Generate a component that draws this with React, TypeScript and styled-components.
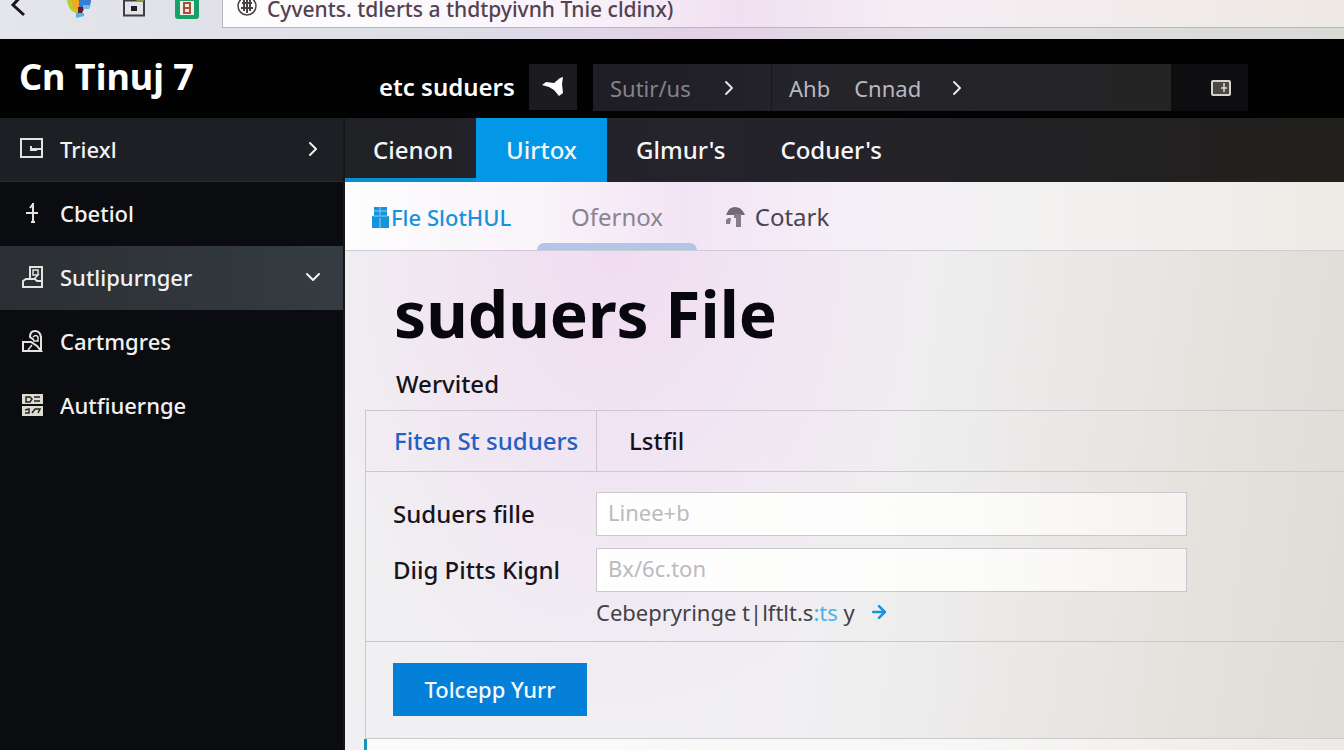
import React from "react";
import styled, { createGlobalStyle, css } from "styled-components";
import { ArrowRight, ChevronDown, ChevronRight } from "lucide-react";

const GlobalStyle = createGlobalStyle`
  *, *::before, *::after { box-sizing: border-box; }
  body {
    margin: 0;
    background: #0a0b0d;
    color: #141318;
    font-family: "Noto Sans", "Open Sans", sans-serif;
    font-size: 24px;
    line-height: 32px;
    font-weight: 500;
  }
  #root { min-height: 100vh; display: flex; }
  a { color: inherit; text-decoration: none; }
  button, input { font: inherit; color: inherit; border: 0; border-radius: 0; margin: 0; }
  svg { display: block; flex: none; }
`;

const Page = styled.div`
  flex: 1;
  min-width: 0;
  min-height: 100vh;
  display: flex;
  flex-direction: column;
`;

/* Browser strip */
const BrowserBar = styled.div`
  height: 39px;
  flex: none;
  display: flex;
  align-items: flex-start;
  background: linear-gradient(90deg, #e4e6eb 0%, #dcdce6 35%, #e3d0e6 52%, #e2dfe4 70%, #d9d9d6 100%);
`;

const BrowserTools = styled.div`
  width: 222px;
  flex: none;
  display: flex;
`;

const ToolButton = styled.button`
  padding: 0;
  background: none;
`;

const AddressBox = styled.label`
  flex: 1;
  height: 28px;
  display: flex;
  align-items: flex-start;
  gap: 8px;
  padding-left: 14px;
  border: solid #b9b6c0;
  border-width: 0 0 1px 1px;
  background: linear-gradient(90deg, #fefefe 0%, #f9f4fb 30%, #f1e0f2 46%, #f5eef4 62%, #eee9e4 100%);
`;

const AddressInput = styled.input`
  flex: 1;
  min-width: 0;
  height: 24px;
  padding: 0 0 6px;
  background: none;
  outline: none;
  color: #55414f;
  font-size: 21px;
  line-height: 18px;
`;

/* Header */
const Header = styled.header`
  height: 79px;
  flex: none;
  display: flex;
  background: #020203;
  color: #fff;
`;

const Brand = styled.a`
  width: 379px;
  flex: none;
  padding: 14px 0 0 19px;
  font-size: 36px;
  line-height: 48px;
  font-weight: 700;
`;

const HeaderTools = styled.div`
  flex: 1;
  display: flex;
  align-items: flex-start;
  padding: 25px 96px 0 0;
`;

const HostName = styled.span`
  width: 150px;
  flex: none;
  line-height: 46px;
  font-weight: 600;
`;

const SendButton = styled.button`
  width: 48px;
  height: 46px;
  flex: none;
  display: flex;
  align-items: center;
  justify-content: center;
  padding: 0;
  margin-right: 16px;
  background: #1b1b20;
`;

const Crumbs = styled.nav`
  flex: 1;
  height: 47px;
  display: flex;
  background: linear-gradient(90deg, #1e1d23, #25242a 40%, #242425);
  color: #b3b1ba;
  font-size: 22px;
  font-weight: 400;
`;

const Crumb = styled.a<{ $first?: boolean }>`
  display: flex;
  align-items: center;
  padding: 0 17px;
  white-space: pre;
  gap: ${(p) => (p.$first ? "26px" : "24px")};
  color: ${(p) => (p.$first ? "#85838c" : "#b9b8c2")};
  width: ${(p) => (p.$first ? "179px" : "auto")};
  border-right: ${(p) => (p.$first ? "1px solid #19181e" : "0")};
`;

const PanelButton = styled.button`
  width: 77px;
  height: 47px;
  display: flex;
  align-items: center;
  justify-content: center;
  padding: 0 0 0 22px;
  background: #0e0e10;
`;

/* Body */
const Body = styled.div`
  flex: 1;
  display: flex;
`;

const Sidebar = styled.nav`
  width: 345px;
  flex: none;
  background: #0b0c0f;
  border-right: 2px solid #15161a;
  color: #f1f2f2;
  font-size: 22px;
`;

const SideItem = styled.a<{ $tone?: "soft" | "active" }>`
  height: 64px;
  display: flex;
  align-items: center;
  gap: 14px;
  padding: 0 18px 2px 20px;
  ${(p) =>
    p.$tone === "soft" &&
    css`
      background: #1c1f23;
      border-bottom: 1px solid #2b2e32;
    `}
  ${(p) =>
    p.$tone === "active" &&
    css`
      background: linear-gradient(90deg, #2b2f33, #343c42);
    `}
`;

const SideLabel = styled.span`
  flex: 1;
`;

const Main = styled.main`
  flex: 1;
  min-width: 0;
  display: flex;
  flex-direction: column;
  background:
    radial-gradient(ellipse 320px 480px at 27% 20%, rgba(240, 214, 242, 0.75), rgba(240, 214, 242, 0)),
    linear-gradient(98deg, #f0f0f1 0%, #f1eff3 40%, #efeeef 56%, #e6e3df 82%, #dfdbd5 100%);
`;

const TopTabs = styled.nav`
  height: 64px;
  flex: none;
  display: flex;
  background: linear-gradient(90deg, #202125, #25232b 35%, #222227 60%, #22201c);
  color: #f6f5f8;
`;

const TopTab = styled.a<{ $state?: "active" | "lined" }>`
  display: flex;
  align-items: center;
  padding: 0 26px 0 29px;
  ${(p) =>
    p.$state === "active" &&
    css`
      justify-content: center;
      width: 131px;
      padding: 0;
      background: #0397e8;
    `}
  ${(p) =>
    p.$state === "lined" &&
    css`
      width: 131px;
      padding: 4px 0 0 28px;
      border-bottom: 4px solid #078fd4;
    `}
`;

const SubTabs = styled.nav`
  height: 69px;
  flex: none;
  display: flex;
  padding-left: 27px;
  background: linear-gradient(90deg, #fdfdfd 0%, #f9f3fa 20%, #f3e4f5 34%, #f5eff7 50%, #f3f2f2 66%, #eeebe6 100%);
  border-bottom: 1px solid #cfcbd3;
  color: #4b4450;
  font-weight: 400;
`;

const SubTab = styled.a<{ $state?: "current" | "marked" }>`
  display: flex;
  flex-direction: column;
  align-items: center;
  justify-content: space-between;
  width: 160px;
  padding-top: 19px;
  ${(p) =>
    p.$state === "current" &&
    css`
      align-items: flex-start;
      width: 165px;
      color: #1593dc;
      font-size: 22px;
      font-weight: 500;
    `}
  ${(p) => p.$state === "marked" && css`color: #8a8390;`}
`;

const SubTabLabel = styled.span`
  display: flex;
  align-items: center;
  gap: 2px;
`;

const WideLabel = styled(SubTabLabel)`
  gap: 9px;
`;

const Marker = styled.span`
  align-self: stretch;
  height: 7px;
  border-radius: 7px 7px 0 0;
  background: #b3c6ea;
`;

const Title = styled.h1`
  margin: 0;
  padding: 19px 0 0 49px;
  font-size: 64px;
  line-height: 88px;
  font-weight: 700;
  color: #09070e;
`;

const Intro = styled.p`
  margin: 0;
  padding: 10px 0 10px 51px;
`;

const Panel = styled.section`
  margin-left: 20px;
  border: solid #cdc8d0;
  border-width: 1px 0 1px 1px;
`;

const PanelTabs = styled.nav`
  height: 61px;
  display: flex;
  border-bottom: 1px solid #cdc8d0;
`;

const PanelTab = styled.a<{ $current?: boolean }>`
  display: flex;
  align-items: center;
  padding: 0 32px;
  ${(p) =>
    p.$current &&
    css`
      width: 231px;
      padding: 0 0 0 28px;
      color: #235fc4;
      border-right: 1px solid #cdc8d0;
    `}
`;

const Form = styled.form`
  margin: 0;
`;

const Fields = styled.div`
  display: grid;
  grid-template-columns: 203px minmax(0, 1fr);
  row-gap: 12px;
  align-items: center;
  padding: 20px 157px 11px 27px;
  border-bottom: 1px solid #cac7ca;
`;

const FieldLabel = styled.label`
  color: #17141c;
`;

const TextField = styled.input`
  width: 100%;
  height: 44px;
  padding: 0 11px 4px;
  border: 1px solid #c9c7c9;
  background: linear-gradient(90deg, #fefefe, #fcfcfb 60%, #f5f3f1);
  font-size: 22px;
  font-weight: 400;
  &::placeholder { color: #bcbabd; opacity: 1; }
`;

const HelpLink = styled.a`
  grid-column: 2;
  display: flex;
  align-items: center;
  gap: 14px;
  margin: -8px 0 2px;
  color: #434047;
  font-size: 22px;
  font-weight: 400;
`;

const Tint = styled.span`
  color: #4bb3ec;
`;

const Actions = styled.div`
  padding: 21px 0 22px 27px;
`;

const SubmitButton = styled.button`
  width: 194px;
  height: 53px;
  padding: 0 0 2px;
  background: #0480d8;
  color: #f4faff;
  font-size: 22px;
`;

const NextPanel = styled.section`
  flex: 1;
  margin-left: 19px;
  border-left: 3px solid #1596b8;
  background: linear-gradient(90deg, #fbfbfb, #f7f7f5 60%, #eeebe6);
`;

const BackIcon = () => (
  <svg width="66" height="20" viewBox="0 0 66 20" fill="none" aria-hidden="true">
    <path d="M23 -6 13 5l11 10" stroke="#17171b" strokeWidth="3" />
  </svg>
);

const ColorIcon = () => (
  <svg width="56" height="20" viewBox="0 0 56 20" aria-hidden="true">
    <path d="M1 0h12v14C6 13 2 8 1 0Z" fill="#b5cf2c" />
    <path d="M5 0h9v9H8Z" fill="#efa824" />
    <path d="M13 0h12c0 5-2 8-7 8h-5Z" fill="#347fd0" />
    <path d="M12 7h7l-3 6h-4Z" fill="#6b1733" />
    <path d="M17 5h8l-2 4h-6Z" fill="#73b9ec" />
    <path d="M10 13h8v3l-8 2Z" fill="#46b6e8" />
  </svg>
);

const BoxIcon = () => (
  <svg width="53" height="20" viewBox="0 0 53 20" fill="none" aria-hidden="true">
    <path d="M2 0.500h20v15H2Z" stroke="#3e3d42" strokeWidth="2" />
    <rect x="9" y="6" width="6" height="5" fill="#1f1e22" />
    <path d="M14 0h8v1l-6 1Z" fill="#8c9b31" />
  </svg>
);

const SheetIcon = () => (
  <svg width="26" height="20" viewBox="0 0 26 20" fill="none" aria-hidden="true">
    <path d="M0 0h24v16q0 3-3 3H3q-3 0-3-3Z" fill="#17a067" />
    <path d="M5 1h14v14H5Z" fill="#f7ece6" />
    <path d="M9 3h6v10H9ZM9 8h6" stroke="#a4503c" strokeWidth="2" />
  </svg>
);

const GlobeIcon = () => (
  <svg width="22" height="18" viewBox="0 0 22 18" fill="none" stroke="#4a4147" strokeWidth="2" aria-hidden="true">
    <circle cx="10" cy="6" r="9" strokeWidth="1.500" />
    <path d="M10 -1v14M5 3h10M4 8h12M7 0v11M13 0v11" />
  </svg>
);

const SendIcon = () => (
  <svg width="24" height="22" viewBox="0 0 24 22" aria-hidden="true">
    <path d="M1 9 5 6l8 1 6-5 3-1-1 7 1 9-4 3-5-6-5-3Z" fill="#fff" />
  </svg>
);

const FrameIcon = () => (
  <svg width="20" height="16" viewBox="0 0 20 16" fill="none" aria-hidden="true">
    <rect x="1" y="1" width="18" height="14" rx="1" fill="#4a4944" stroke="#d5d4cb" strokeWidth="2" />
    <path d="M13 3v9M10 8h6" stroke="#dddcd0" strokeWidth="1.500" />
  </svg>
);

const sideStroke = { fill: "none", stroke: "#e4e3df", strokeWidth: 2 };

const WindowIcon = () => (
  <svg width="26" height="24" viewBox="0 0 26 24" {...sideStroke} aria-hidden="true">
    <path d="M1 2h21v18H1ZM22 12H10M11 9v4h6" />
  </svg>
);

const PlusIcon = () => (
  <svg width="26" height="24" viewBox="0 0 26 24" {...sideStroke} aria-hidden="true">
    <path d="M6 12h12M13 2v20M13 3l-3 4M11 21h4" />
  </svg>
);

const DeskIcon = () => (
  <svg width="26" height="24" viewBox="0 0 26 24" {...sideStroke} aria-hidden="true">
    <path d="M3 22V16l3-2h9l2 2h5v6ZM10 14V2h12v15" />
    <path d="M13 5h5v5h-5ZM19 9l-5 5" strokeWidth="1.500" />
  </svg>
);

const LockIcon = () => (
  <svg width="26" height="24" viewBox="0 0 26 24" {...sideStroke} aria-hidden="true">
    <path d="M3 22V13h8l6 4 4 5ZM21 22V8q-1-6-6-6-5 0-5 6l4 3" />
    <path d="M13 8q3-3 5 0v4h-5M8 21l4-5" strokeWidth="1.500" />
  </svg>
);

const GridIcon = () => (
  <svg width="26" height="24" viewBox="0 0 26 24" aria-hidden="true">
    <path d="M2 1h21v10H2ZM2 13h21v10H2Z" fill="#dedbd0" />
    <path d="M6 4h4l2 2-2 3H6ZM14 4h6M14 8h6M5 17l4-1v4H5M12 20l3-4h5l-2 4" fill="none" stroke="#25251f" strokeWidth="1.500" />
  </svg>
);

const ServerIcon = () => (
  <svg width="17" height="22" viewBox="0 0 17 22" aria-hidden="true">
    <path d="M2 1h13v9h2v12H0V10h2Z" fill="#1593dc" />
    <path d="M8 1v8M8 12v10M2 5h13M1 10h15" stroke="#8fcdf2" strokeWidth="1" />
  </svg>
);

const CanopyIcon = () => (
  <svg width="21" height="22" viewBox="0 0 21 22" aria-hidden="true">
    <path d="M2 7Q4 1 10 1t9 6l1 2H1Z" fill="#716a76" />
    <path d="M9 8h7v13h-5V12H9ZM3 12h3l-1 6H1v-4Z" fill="#857d89" />
  </svg>
);

const sideItems: {
  label: string;
  icon: React.ReactNode;
  tone?: "soft" | "active";
  end?: React.ReactNode;
}[] = [
  { label: "Triexl", icon: <WindowIcon />, tone: "soft", end: <ChevronRight size={24} /> },
  { label: "Cbetiol", icon: <PlusIcon /> },
  { label: "Sutlipurnger", icon: <DeskIcon />, tone: "active", end: <ChevronDown size={24} /> },
  { label: "Cartmgres", icon: <LockIcon /> },
  { label: "Autfiuernge", icon: <GridIcon /> },
];

export default function App() {
  return (
    <>
      <GlobalStyle />
      <Page>
        <BrowserBar>
          <BrowserTools>
            <ToolButton aria-label="Back"><BackIcon /></ToolButton>
            <ToolButton aria-label="Colours"><ColorIcon /></ToolButton>
            <ToolButton aria-label="Archive"><BoxIcon /></ToolButton>
            <ToolButton aria-label="Sheets"><SheetIcon /></ToolButton>
          </BrowserTools>
          <AddressBox>
            <GlobeIcon />
            <AddressInput aria-label="Address" defaultValue="Cyvents. tdlerts a thdtpyivnh Tnie cldinx)" />
          </AddressBox>
        </BrowserBar>

        <Header>
          <Brand href="#">Cn Tinuj 7</Brand>
          <HeaderTools>
            <HostName>etc suduers</HostName>
            <SendButton aria-label="Send"><SendIcon /></SendButton>
            <Crumbs aria-label="Breadcrumb">
              <Crumb href="#" $first>Sutir/us<ChevronRight size={24} color="#e6dfe6" /></Crumb>
              <Crumb href="#"><span>Ahb</span><span>Cnnad</span><ChevronRight size={24} color="#e6e6e6" /></Crumb>
            </Crumbs>
            <PanelButton aria-label="Panel"><FrameIcon /></PanelButton>
          </HeaderTools>
        </Header>

        <Body>
          <Sidebar aria-label="Sections">
            {sideItems.map((item) => (
              <SideItem key={item.label} href="#" $tone={item.tone}>
                {item.icon}
                <SideLabel>{item.label}</SideLabel>
                {item.end}
              </SideItem>
            ))}
          </Sidebar>

          <Main>
            <TopTabs aria-label="Views">
              <TopTab href="#" $state="lined">Cienon</TopTab>
              <TopTab href="#" $state="active">Uirtox</TopTab>
              <TopTab href="#">Glmur's</TopTab>
              <TopTab href="#">Coduer's</TopTab>
            </TopTabs>
            <SubTabs aria-label="Pages">
              <SubTab href="#" $state="current">
                <SubTabLabel><ServerIcon />Fle SlotHUL</SubTabLabel>
              </SubTab>
              <SubTab href="#" $state="marked">
                <SubTabLabel>Ofernox</SubTabLabel>
                <Marker />
              </SubTab>
              <SubTab href="#">
                <WideLabel><CanopyIcon />Cotark</WideLabel>
              </SubTab>
            </SubTabs>

            <Title>suduers File</Title>
            <Intro>Wervited</Intro>

            <Panel>
              <PanelTabs aria-label="File tabs">
                <PanelTab href="#" $current>Fiten St suduers</PanelTab>
                <PanelTab href="#">Lstfil</PanelTab>
              </PanelTabs>
              <Form onSubmit={(e) => e.preventDefault()}>
                <Fields>
                  <FieldLabel htmlFor="file">Suduers fille</FieldLabel>
                  <TextField id="file" placeholder="Linee+b" />
                  <FieldLabel htmlFor="path">Diig Pitts Kignl</FieldLabel>
                  <TextField id="path" placeholder="Bx/6c.ton" />
                  <HelpLink href="#">
                    <span>Cebepryringe t|lftlt.s<Tint>:ts</Tint> y</span>
                    <ArrowRight size={20} strokeWidth={3} color="#1593dc" />
                  </HelpLink>
                </Fields>
                <Actions>
                  <SubmitButton type="submit">Tolcepp Yurr</SubmitButton>
                </Actions>
              </Form>
            </Panel>
            <NextPanel />
          </Main>
        </Body>
      </Page>
    </>
  );
}
